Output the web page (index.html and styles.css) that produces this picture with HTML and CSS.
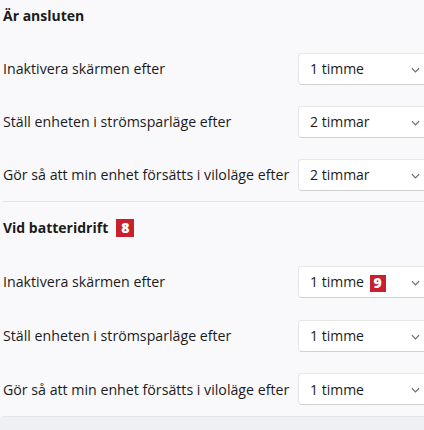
FILE: index.html
```html
<!DOCTYPE html>
<html lang="sv">
<head>
<meta charset="utf-8">
<link rel="stylesheet" href="styles.css">
</head>
<body>
<div class="page">
  <section class="group first">
    <h2 class="heading">Är ansluten</h2>
    <div class="row"><span class="label">Inaktivera skärmen efter</span><div class="select"><span>1 timme</span><svg class="chev" viewBox="0 0 10 6"><path d="M1 1l4 4 4-4"/></svg></div></div>
    <div class="row"><span class="label">Ställ enheten i strömsparläge efter</span><div class="select"><span>2 timmar</span><svg class="chev" viewBox="0 0 10 6"><path d="M1 1l4 4 4-4"/></svg></div></div>
    <div class="row"><span class="label">Gör så att min enhet försätts i viloläge efter</span><div class="select"><span>2 timmar</span><svg class="chev" viewBox="0 0 10 6"><path d="M1 1l4 4 4-4"/></svg></div></div>
  </section>
  <section class="group second">
    <h2 class="heading">Vid batteridrift <span class="badge">8</span></h2>
    <div class="row tall"><span class="label">Inaktivera skärmen efter</span><div class="select"><span>1 timme <span class="badge small">9</span></span><svg class="chev" viewBox="0 0 10 6"><path d="M1 1l4 4 4-4"/></svg></div></div>
    <div class="row tall"><span class="label">Ställ enheten i strömsparläge efter</span><div class="select"><span>1 timme</span><svg class="chev" viewBox="0 0 10 6"><path d="M1 1l4 4 4-4"/></svg></div></div>
    <div class="row tall"><span class="label">Gör så att min enhet försätts i viloläge efter</span><div class="select"><span>1 timme</span><svg class="chev" viewBox="0 0 10 6"><path d="M1 1l4 4 4-4"/></svg></div></div>
  </section>
</div>
</body>
</html>
```
FILE: styles.css
```css
html, body {
  margin: 0;
  padding: 0;
  height: 100%;
  overflow: hidden;
  background: #eef0f3;
}
body {
  font-family: "Open Sans", "Noto Sans", sans-serif;
  font-size: 14.2px;
  color: #1b1b1b;
}
.page {
  background: #f9f9fb;
  padding-left: 3px;
  overflow: hidden;
}
.group {
  border-bottom: 1px solid #e3e5e8;
}
.heading {
  margin: 0;
  font-size: 14px;
  font-weight: 700;
  line-height: 20px;
  display: flex;
  align-items: center;
  gap: 8px;
}
.first .heading { padding-top: 6px; margin-bottom: 16px; }
.second .heading { padding-top: 16px; margin-bottom: 17px; }
.row {
  height: 53px;
  display: grid;
  grid-template-columns: 295px 126px;
  align-items: center;
  overflow: hidden;
}
.row.tall { height: 53.7px; }
.label {
  white-space: nowrap;
}
.select {
  height: 32px;
  box-sizing: border-box;
  width: 132px;
  background: #fff;
  border: 1px solid #e6e6e6;
  border-bottom-color: #d0d0d0;
  border-radius: 4px;
  display: flex;
  align-items: center;
  padding-left: 11px;
  position: relative;
  font-size: 14px;
}
.chev {
  position: absolute;
  left: 112px;
  top: 13px;
  width: 9px;
  height: 6px;
  fill: none;
  stroke: #6a6a6a;
  stroke-width: 1.3;
}
.badge {
  display: inline-flex;
  align-items: center;
  justify-content: center;
  background: #c8202d;
  color: #fff;
  font-weight: 800;
  font-size: 14px;
  width: 18px;
  height: 18px;
  line-height: 18px;
}
.badge.small {
  width: 16px;
  height: 17px;
  margin-left: 2px;
  vertical-align: middle;
}
```
